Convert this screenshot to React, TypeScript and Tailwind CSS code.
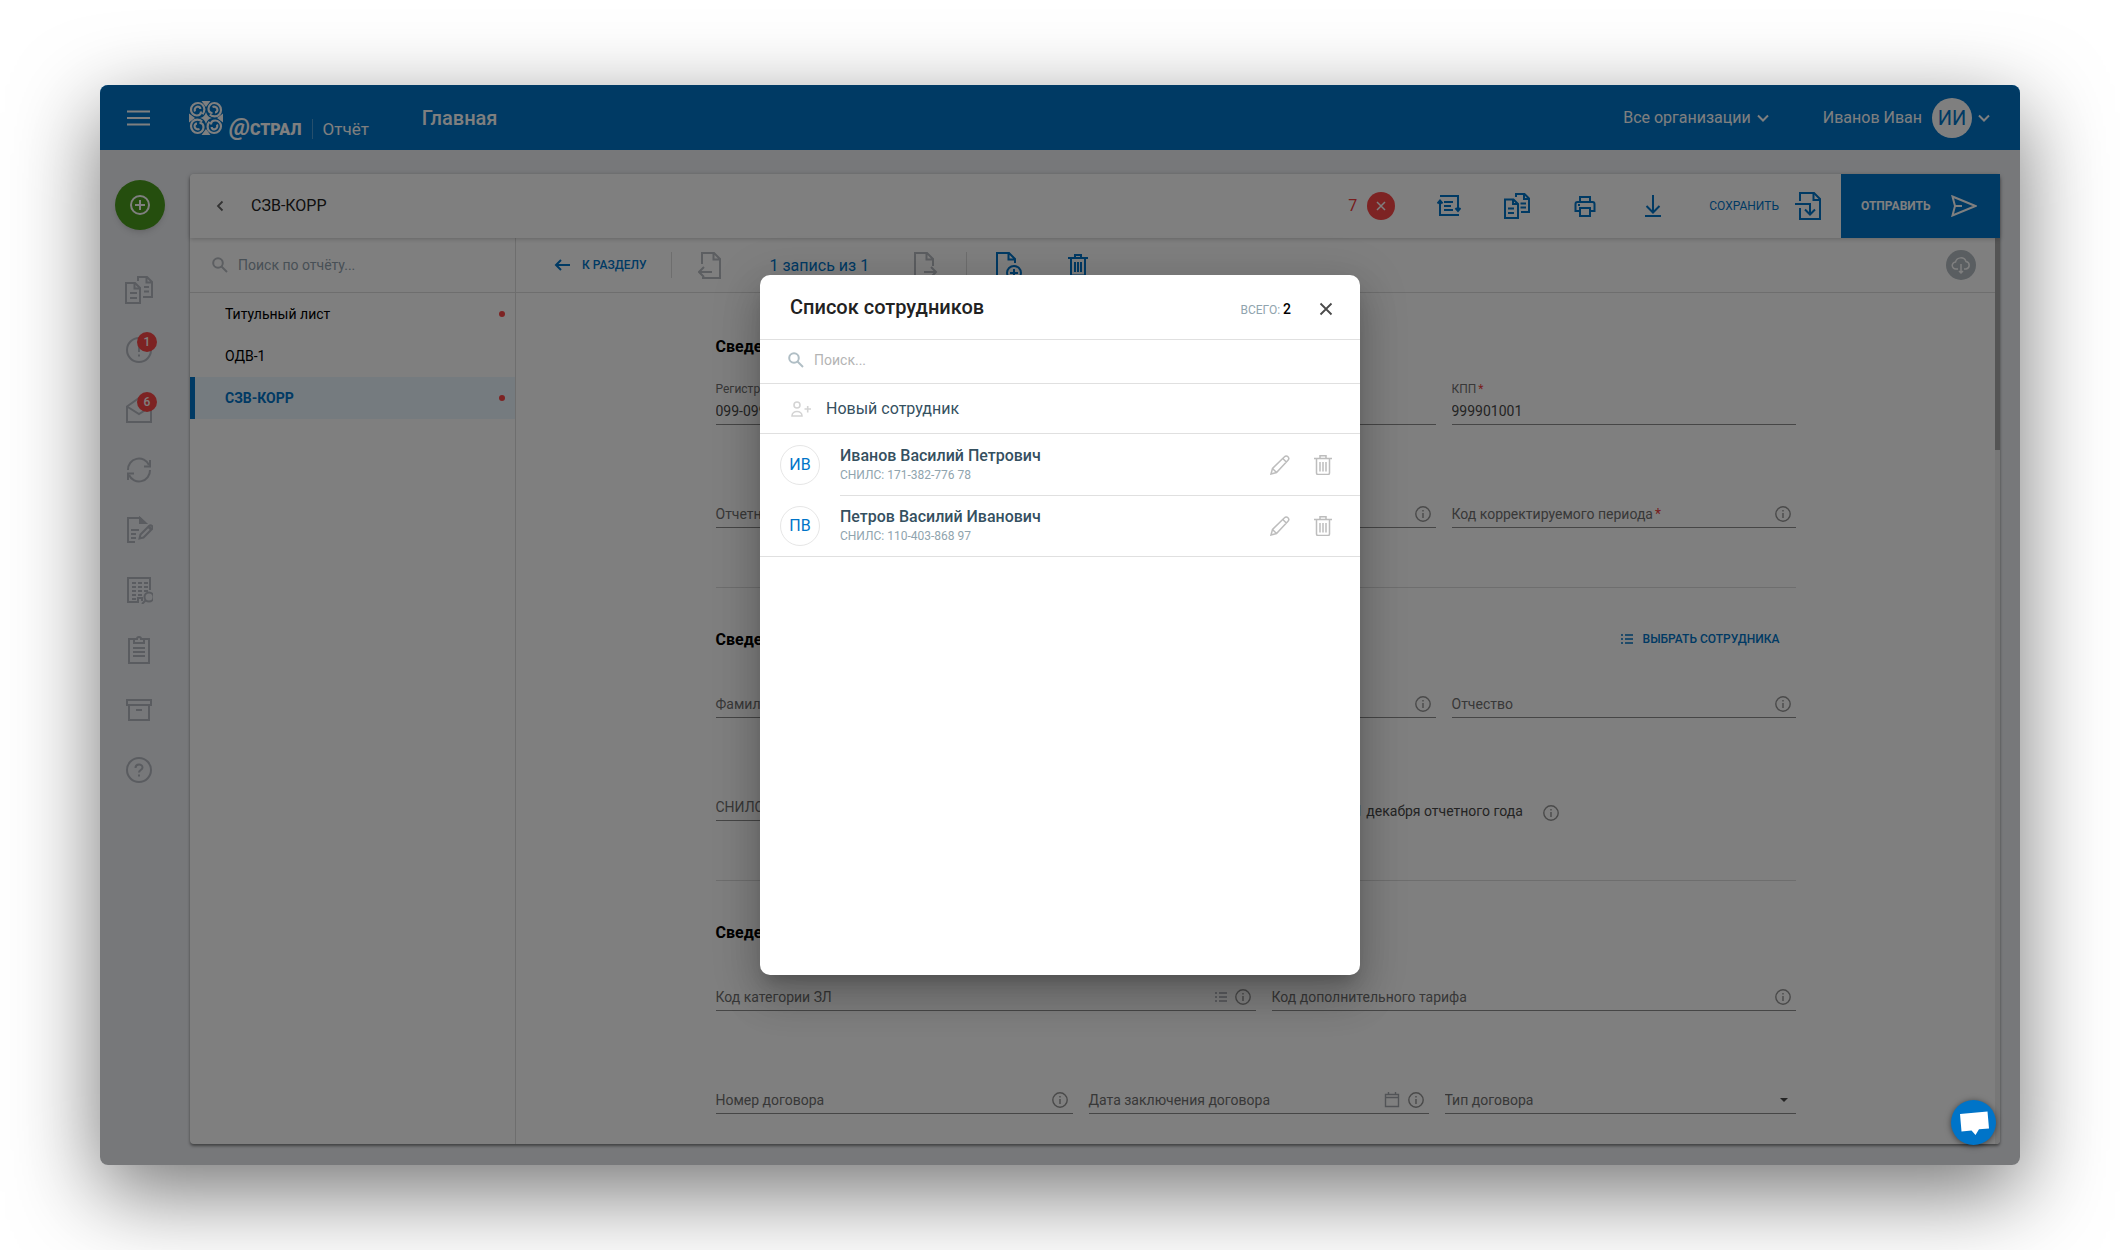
import { useState, type ReactNode } from 'react'
import clsx from 'clsx'

function Svg({ w = 24, h = 24, className, sw = 2, children }: {
  w?: number; h?: number; className?: string; sw?: number; children: ReactNode
}) {
  return (
    <svg width={w} height={h} viewBox={`0 0 ${w} ${h}`} fill="none" stroke="currentColor" strokeWidth={sw} className={clsx('shrink-0', className)} aria-hidden="true">
      {children}
    </svg>
  )
}

/* ---------- icons ---------- */

const ChevronDown = () => <Svg w={12} h={12}><path d="M1 3.5l5 5 5-5" /></Svg>

const LogoMark = () => (
  <Svg w={34} h={34} sw={2.2}>
    {['', 'rotate(90 17 17)', 'rotate(180 17 17)', 'rotate(270 17 17)'].map(t => (
      <g key={t} transform={t}>
        <path d="M13.500 13.200c1.200-1.300 1.900-3 1.900-5C15.400 4.500 12.500 2 9 2 5 2 2 5 2 8.700c0 3.300 2.600 5.800 5.800 5.800 2.600 0 4.200-1.800 4.200-4" />
        <path d="M6 10.500C5.200 8.500 6 6.300 8 5.700c1.800-.500 3.400.600 3.300 2.300" />
        <path d="M12.500 0h9L17 6z" fill="currentColor" stroke="none" />
      </g>
    ))}
    <path d="M17 11c1 3.500 2.500 5 6 6-3.500 1-5 2.500-6 6-1-3.500-2.500-5-6-6 3.500-1 5-2.500 6-6z" fill="currentColor" stroke="none" />
  </Svg>
)

const SearchIcon = ({ className }: { className?: string }) => (
  <Svg w={16} h={16} className={className}><circle cx="6" cy="6" r="4.800" /><path d="M9.500 9.500l5.500 5.500" /></Svg>
)

const CopiesIcon = () => (
  <Svg w={28} h={28}>
    <path d="M1 7h9l5 5v15H1z" /><path d="M9.500 7v5.500H15" /><path d="M5 17h7M5 22h7" />
    <path d="M13 5V1h9l5 5v15h-9M21.500 1v5.500H27M19 11h5M19 15.500h5" />
  </Svg>
)
const AlertIcon = () => <Svg w={28} h={28}><circle cx="14" cy="14" r="12" /><path d="M14 8v8M14 18.500v2" /></Svg>
const MailIcon = () => <Svg w={28} h={28}><path d="M2 10.500L14 2l12 8.500V26H2z" /><path d="M2 10.500l12 7.500 12-7.500" /></Svg>
const RefreshIcon = () => (
  <Svg w={28} h={28}>
    <path d="M3 14A11 11 0 0 1 24 9" /><path d="M25 4v6.500h-6" />
    <path d="M25 14A11 11 0 0 1 4 19" /><path d="M3 24v-6.500h6" />
  </Svg>
)
const EditDocIcon = () => (
  <Svg w={28} h={28}>
    <path d="M10 26H3V2h12l5 5" /><path d="M15 2v5h5.500z" fill="currentColor" />
    <path d="M6 14h8M6 18h5M6 22h5" />
    <path d="M14.500 22.500l1-4L24 10a2.100 2.100 0 0 1 3 3l-8.500 8.500z" />
    <path d="M23.500 10.500l3 3" strokeWidth="3" />
  </Svg>
)
const BuildingIcon = () => (
  <Svg w={28} h={28}>
    <path d="M12 26H3V2h22v12" />
    <path d="M7 7h16M7 11h16M7 15h16M7 19h10M7 23h4" strokeDasharray="4 2" />
    <path d="M8 26h5v-4h4v3" /><circle cx="24" cy="21" r="4.500" /><path d="M20.500 24.500L17 28" />
  </Svg>
)
const ClipboardIcon = () => (
  <Svg w={28} h={28}>
    <path d="M8 3H4v24h20V3h-4" /><path d="M9 3h3a2 2 0 0 1 4 0h3v4H9z" /><path d="M8 12h12M8 16h12M8 20h12" />
  </Svg>
)
const ArchiveIcon = () => <Svg w={28} h={28}><path d="M2 4h24v5H2zM4 9v15h20V9M11 14h6" /></Svg>
const HelpIcon = () => (
  <Svg w={28} h={28}><circle cx="14" cy="14" r="12" /><path d="M10.500 12c0-4.500 7-4.500 7-.500 0 2.500-3.500 2.500-3.500 5M14 18.500v2" /></Svg>
)

const SwapIcon = () => (
  <Svg>
    <path d="M3 2h18v15M3 7v14h19" /><path d="M.500 9.500L3 6.500l2.500 3M18.500 14l2.500 3 2.500-3" /><path d="M7 8h9M7 12h7M7 16h9" />
  </Svg>
)
const CopiesSmallIcon = () => (
  <Svg w={26} h={26} sw={2}>
    <path d="M1 6.500h8.500l4.500 4.500v14H1z" /><path d="M9 6.500V11h5M4 15.500h6M4 20h6" />
    <path d="M12 4V1h8.500L25 5.500V19h-8M20 1v5h5M16.500 10.500H22M16.500 14.500H22" />
  </Svg>
)
const PrinterIcon = () => (
  <Svg w={24} h={24}>
    <path d="M7 8V3h10v5M6 17H2.500V10q0-2 2-2h15q2 0 2 2v7H18" /><path d="M7 14h10v8H7z" /><path d="M5 11h2" />
  </Svg>
)
const DownloadIcon = () => <Svg><path d="M12 1v17M5.500 12l6.500 6.500 6.500-6.500M4 22h16" /></Svg>
const SaveIcon = () => (
  <Svg w={26} h={28}>
    <path d="M5 9V1h14l6 6v20H5V16" /><path d="M18.500 1v7H25M0 12h15v10M10 17.500l5 5 5-5" />
  </Svg>
)
const SendIcon = () => <Svg w={26} h={22}><path d="M1.500 1.500l23 9.500-23 9.500L4 11zM4 11h7" /></Svg>
const CloudIcon = () => (
  <Svg w={20} h={20} sw={1.5}>
    <path d="M7 14H5a3.500 3.500 0 0 1-.500-7A5.500 5.500 0 0 1 15 6.500a3.800 3.800 0 0 1 0 7.500h-2M10 9v9M8 16l2 2 2-2" />
  </Svg>
)
const DocLeftIcon = () => <Svg w={24} h={28}><path d="M4 13V2h12l6 6v19H4M15.500 2v6.500H22M14 21H1M6 16l-5 5 5 5" /></Svg>
const DocRightIcon = () => <Svg w={24} h={28}><path d="M1 27V2h12l6 6v7M12.500 2v6.500H19M1 27h17M10 21h12M17 16l5 5-5 5" /></Svg>
const DocPlusIcon = () => (
  <Svg w={26} h={28}>
    <path d="M9 26H1V2h12l6 6v4M12.500 2v6.500H19" /><circle cx="18" cy="22" r="7" /><path d="M18 18v8M14 22h8" />
  </Svg>
)
const TrashIcon = () => <Svg w={20} h={24}><path d="M3 5v17.500h14V5M0 5h20M7 5V2h6v3M7 9v10M10 9v10M13 9v10" /></Svg>
const RowTrashIcon = () => (
  <Svg w={18} h={20} sw={1}>
    <path d="M2.500 3.500V18q0 1.500 1.500 1.500h10q1.500 0 1.500-1.500V3.500M0 3.500h18M6 3V.800h6V3M6 7v9.500M9 7v9.500M12 7v9.500" strokeWidth="1.500" />
  </Svg>
)
const PencilIcon = () => (
  <Svg w={20} h={20} sw={1}>
    <path d="M1 19l1.500-5.500L14.500 1.800a2.300 2.300 0 0 1 3.500 3.400L6.500 17.500zM12.800 3.500l3.500 3.500M2.500 13.500l4 4" strokeWidth="1.500" />
  </Svg>
)
const ListIcon = ({ className }: { className?: string }) => (
  <Svg w={12} h={12} className={className}><path d="M0 2h2M4 2h8M0 6h2M4 6h8M0 10h2M4 10h8" strokeWidth="1.500" /></Svg>
)
const InfoIcon = () => (
  <Svg w={16} h={16} sw={1} className="text-[#949494]"><circle cx="8" cy="8" r="7.200" strokeWidth="1.400" /><path d="M8 7v5M8 4v1.500" strokeWidth="1.400" /></Svg>
)
const CalendarIcon = () => (
  <Svg w={16} h={16} sw={1} className="text-[#a4a8ae]"><path d="M1.500 2.500h13v12h-13zM1.500 5.500h13M4.500 0v2.500M11.500 0v2.500" strokeWidth="1.400" /></Svg>
)

/* ---------- form parts ---------- */

type FieldProps = {
  id: string
  label: string
  value?: string
  required?: boolean
  icons?: ReactNode
}

function Field({ id, label, value, required, icons }: FieldProps) {
  const [text, setText] = useState(value ?? '')
  const filled = text !== ''
  const caption = (
    <label htmlFor={id} className={clsx('whitespace-nowrap text-[#707070]', filled ? 'text-xs' : 'text-sm')}>
      {label}{required && <span className="ml-0.5 text-[#f03a3a]">*</span>}
    </label>
  )
  return (
    <div className="flex h-[46px] min-w-0 flex-col justify-end">
      {filled && caption}
      <div className="flex h-7 items-center gap-2 border-b border-[#8c8c8c] pr-[5px]">
        {!filled && caption}
        <input id={id} value={text} onChange={e => setText(e.target.value)} className="min-w-0 flex-1 bg-transparent text-sm text-[#484848] outline-none" />
        {icons}
      </div>
    </div>
  )
}

function Section({ title, action, last, children }: { title: string; action?: ReactNode; last?: boolean; children: ReactNode }) {
  return (
    <section className={clsx('pt-[39px]', !last && 'border-b border-[#dcdcdc] pb-[59px]')}>
      <div className="mb-[21px] flex h-6 items-center justify-between">
        <h2 className="pt-0.5 text-base font-bold text-black">{title}</h2>
        {action}
      </div>
      <div className="flex flex-col gap-[57px]">{children}</div>
    </section>
  )
}

/* ---------- data ---------- */

const sideItems: { name: string; icon: ReactNode; badge?: number }[] = [
  { name: 'Отчёты', icon: <CopiesIcon /> },
  { name: 'Требования', icon: <AlertIcon />, badge: 1 },
  { name: 'Письма', icon: <MailIcon />, badge: 6 },
  { name: 'Сверки', icon: <RefreshIcon /> },
  { name: 'Документы', icon: <EditDocIcon /> },
  { name: 'Контрагенты', icon: <BuildingIcon /> },
  { name: 'Справки', icon: <ClipboardIcon /> },
  { name: 'Архив', icon: <ArchiveIcon /> },
  { name: 'Помощь', icon: <HelpIcon /> },
]

const reportParts = [
  { name: 'Титульный лист', hasError: true },
  { name: 'ОДВ-1', hasError: false },
  { name: 'СЗВ-КОРР', hasError: true },
]

const employees = [
  { initials: 'ИВ', name: 'Иванов Василий Петрович', snils: '171-382-776 78' },
  { initials: 'ПВ', name: 'Петров Василий Иванович', snils: '110-403-868 97' },
]

const threeCols = 'grid grid-cols-[348fr_356fr_344fr] gap-4'

/* ---------- layout ---------- */

function Header() {
  return (
    <header className="flex h-[65px] items-center rounded-t-lg bg-[#0074c8] pr-[30px] pl-[27px] text-white">
      <button aria-label="Меню" className="mr-[39px]">
        <Svg w={23} h={16}><path d="M0 1.500h23M0 8h23M0 14.500h23" /></Svg>
      </button>
      <a href="#" className="flex items-baseline gap-1.5 pt-1">
        <LogoMark />
        <span className="flex items-baseline leading-none font-black">
          <span className="text-2xl leading-none font-bold italic">@</span>
          <span className="text-base leading-none">СТРАЛ</span>
        </span>
        <span className="ml-1 border-l border-white/30 pl-2.5 text-[17px] leading-5">Отчёт</span>
      </a>
      <h1 className="ml-[53px] text-xl font-medium">Главная</h1>
      <button className="ml-auto flex items-center gap-1.5 text-base">Все организации <ChevronDown /></button>
      <button className="ml-[54px] flex items-center gap-1.5 text-base">
        Иванов Иван
        <span className="ml-1 flex size-10 items-center justify-center rounded-full bg-white text-xl text-[#0074c8]">ИИ</span>
        <ChevronDown />
      </button>
    </header>
  )
}

function Sidebar() {
  return (
    <nav className="mr-3 flex w-[78px] shrink-0 flex-col items-center pt-1.5">
      <button aria-label="Создать" className="mb-[30px] ml-px flex size-[50px] items-center justify-center rounded-full bg-[#4a9c1c] text-white shadow-md">
        <Svg w={20} h={20}><circle cx="10" cy="10" r="9" /><path d="M10 5v10M5 10h10" /></Svg>
      </button>
      {sideItems.map(item => (
        <a key={item.name} href="#" aria-label={item.name} className="flex h-15 items-center text-[#b4b8c0]">
          <span className="relative">
            {item.icon}
            {item.badge && (
              <span className="absolute -top-1 -right-1 flex size-5 items-center justify-center rounded-full bg-[#fa4646] text-xs font-medium text-white">
                {item.badge}
              </span>
            )}
          </span>
        </a>
      ))}
    </nav>
  )
}

function ReportBar() {
  return (
    <div className="relative flex h-16 items-center rounded-t bg-white pl-[25px] text-[#0074c8] shadow-[0_1px_5px_rgba(0,0,0,0.22)]">
      <button aria-label="Назад" className="mr-[26px] text-[#666]">
        <Svg w={10} h={12}><path d="M7.500 1.500L3 6l4.500 4.500" strokeWidth="1.800" /></Svg>
      </button>
      <span className="text-base text-[#222]">СЗВ-КОРР</span>
      <div className="ml-auto flex items-center">
        <span className="mr-2.5 text-base text-[#f03a3a]">7</span>
        <button aria-label="Ошибки" className="mr-[42px] flex size-7 items-center justify-center rounded-full bg-[#fa4646] text-white">
          <Svg w={10} h={10}><path d="M1 1l8 8M9 1l-8 8" strokeWidth="1.500" /></Svg>
        </button>
        <div className="flex items-center gap-11">
          <button aria-label="Обмен"><SwapIcon /></button>
          <button aria-label="Копировать" className="-mx-px"><CopiesSmallIcon /></button>
          <button aria-label="Печать"><PrinterIcon /></button>
          <button aria-label="Скачать"><DownloadIcon /></button>
        </div>
        <button className="mr-5 ml-11 flex items-center gap-4 text-xs">СОХРАНИТЬ <SaveIcon /></button>
      </div>
      <button className="flex h-full w-[159px] items-center gap-5 bg-[#0074c8] pl-5 text-xs font-bold text-white">
        ОТПРАВИТЬ <SendIcon />
      </button>
    </div>
  )
}

function PartsPanel() {
  return (
    <aside className="w-[326px] shrink-0 border-r border-[#dcdcdc]">
      <div className="flex h-[55px] items-center gap-2.5 border-b border-[#dcdcdc] pl-[22px]">
        <SearchIcon className="text-[#b8bcc2]" />
        <input aria-label="Поиск по отчёту" placeholder="Поиск по отчёту..." className="min-w-0 flex-1 text-sm outline-none placeholder:text-[#90a0ac]" />
      </div>
      {reportParts.map((part, i) => (
        <a
          key={part.name}
          href="#"
          className={clsx(
            'flex h-[42px] items-center justify-between border-l-5 pr-2.5 pl-[30px] text-sm',
            i === 2 ? 'border-[#0074c8] bg-[#eaf6ff] font-bold text-[#0074c8]' : 'border-transparent text-black',
          )}
        >
          {part.name}
          {part.hasError && <span className="size-1.5 rounded-full bg-[#fa4646]" />}
        </a>
      ))}
    </aside>
  )
}

function RecordBar() {
  return (
    <div className="flex h-[55px] items-center border-b border-[#dcdcdc] pr-[19px] pl-[38px] text-[#0074c8]">
      <button className="mr-6 flex items-center gap-3 text-xs font-medium">
        <Svg w={16} h={12}><path d="M16 6H2M7 1L2 6l5 5" /></Svg> К РАЗДЕЛУ
      </button>
      <span className="mr-[26px] h-6.5 border-l border-[#dcdcdc]" />
      <button aria-label="Предыдущая запись" className="text-[#b8bcc2]"><DocLeftIcon /></button>
      <span className="mr-[45px] ml-12 pt-0.5 text-base">1 запись из 1</span>
      <button aria-label="Следующая запись" className="text-[#b8bcc2]"><DocRightIcon /></button>
      <span className="ml-7 h-6.5 border-l border-[#dcdcdc]" />
      <button aria-label="Добавить запись" className="mr-[46px] ml-[29px]"><DocPlusIcon /></button>
      <button aria-label="Удалить запись"><TrashIcon /></button>
      <span className="ml-auto flex size-[30px] items-center justify-center rounded-full bg-[#b4bcc2] text-white"><CloudIcon /></span>
    </div>
  )
}

function ReportForm() {
  return (
    <form className="mx-auto w-full max-w-[1080px] pt-0.5">
      <Section title="Сведения о страхователе">
        <div className={threeCols}>
          <Field id="reg" label="Регистрационный номер в ПФР" value="099-099-099999" required />
          <Field id="inn" label="ИНН" value="9999010010" required />
          <Field id="kpp" label="КПП" value="999901001" required />
        </div>
        <div className={threeCols}>
          <Field id="period" label="Отчетный" icons={<InfoIcon />} />
          <Field id="year" label="Тип сведений" icons={<InfoIcon />} />
          <Field id="corr" label="Код корректируемого периода" required icons={<InfoIcon />} />
        </div>
      </Section>

      <Section
        title="Сведения о застрахованном лице"
        action={
          <button type="button" className="mr-4 flex items-center gap-2.5 text-xs font-medium text-[#0074c8]">
            <ListIcon /> ВЫБРАТЬ СОТРУДНИКА
          </button>
        }
      >
        <div className={threeCols}>
          <Field id="surname" label="Фамилия" icons={<InfoIcon />} />
          <Field id="name" label="Имя" icons={<InfoIcon />} />
          <Field id="patronymic" label="Отчество" icons={<InfoIcon />} />
        </div>
        <div className="grid grid-cols-[348fr_492fr_224fr] gap-4">
          <Field id="snils" label="СНИЛС" icons={<InfoIcon />} />
          <div className="flex items-end justify-end gap-5 text-sm text-[#484848]">
            <label className="flex items-center gap-2">
              <input type="checkbox" className="size-4" />
              Сведения об увольнении на 31 декабря отчетного года
            </label>
            <InfoIcon />
          </div>
        </div>
      </Section>

      <Section title="Сведения о трудовом договоре" last>
        <div className="grid grid-cols-[540fr_524fr] gap-4">
          <Field id="category" label="Код категории ЗЛ" icons={<><ListIcon className="text-[#a4a8ae]" /><InfoIcon /></>} />
          <Field id="tariff" label="Код дополнительного тарифа" icons={<InfoIcon />} />
        </div>
        <div className="grid grid-cols-[357fr_340fr_351fr] gap-4">
          <Field id="number" label="Номер договора" icons={<InfoIcon />} />
          <Field id="date" label="Дата заключения договора" icons={<><CalendarIcon /><InfoIcon /></>} />
          <div className="flex h-[46px] flex-col justify-end">
            <div className="flex h-7 items-center border-b border-[#8c8c8c] pr-2">
              <select aria-label="Тип договора" defaultValue="" className="flex-1 appearance-none bg-transparent text-sm text-[#707070] outline-none">
                <option value="">Тип договора</option>
                <option>Трудовой</option>
                <option>Гражданско-правовой</option>
              </select>
              <svg width="8" height="4" viewBox="0 0 8 4" className="text-[#484848]" aria-hidden="true"><path d="M0 0h8L4 4z" fill="currentColor" /></svg>
            </div>
          </div>
        </div>
      </Section>
    </form>
  )
}

function EmployeesDialog({ onClose }: { onClose: () => void }) {
  return (
    <div
      role="dialog"
      aria-labelledby="employees-title"
      className="min-h-[700px] w-[600px] rounded-[10px] bg-white shadow-[0_11px_15px_-7px_rgba(0,0,0,0.2),0_24px_38px_3px_rgba(0,0,0,0.14),0_9px_46px_8px_rgba(0,0,0,0.12)]"
    >
      <div className="flex h-[65px] items-center border-b border-[#e0e0e0] pr-[27px] pl-[30px]">
        <h2 id="employees-title" className="mr-auto text-xl font-medium text-[#222]">Список сотрудников</h2>
        <div className="flex items-center pt-1">
          <span className="text-xs text-[#90a4ae]">ВСЕГО: <span className="text-sm font-medium text-black">2</span></span>
          <button aria-label="Закрыть" onClick={onClose} className="ml-7 text-[#4a4a4a]">
            <Svg w={14} h={14}><path d="M1.500 1.500l11 11M12.500 1.500l-11 11" strokeWidth="1.800" /></Svg>
          </button>
        </div>
      </div>
      <div className="flex h-11 items-center gap-2.5 border-b border-[#e0e0e0] pb-1 pl-7">
        <SearchIcon className="text-[#b0bec5]" />
        <input aria-label="Поиск сотрудника" placeholder="Поиск..." className="min-w-0 flex-1 text-sm outline-none placeholder:text-[#b4b4b4]" />
      </div>
      <button className="flex h-[50px] w-full items-center gap-[15px] border-b border-[#e0e0e0] pl-[31px] text-base text-[#35505f]">
        <Svg w={20} h={16} sw={1} className="text-[#d4d4d4]">
          <g strokeWidth="1.600"><circle cx="6" cy="4" r="3" /><path d="M1 15c0-6 10-6 10 0zM13.500 8H20M16.700 5v6.500" /></g>
        </Svg>
        Новый сотрудник
      </button>
      <ul className="border-b border-[#e0e0e0]">
        {employees.map((person, i) => (
          <li key={person.snils} className="flex items-center pl-5">
            <span className="mr-5 flex size-10 items-center justify-center rounded-full border border-[#e6e6e6] text-base text-[#0074c8]">{person.initials}</span>
            <div className={clsx('flex h-[61px] flex-1 items-center pr-7', i > 0 && 'border-t border-[#e0e0e0]')}>
              <div className="mr-auto">
                <p className="text-base leading-5 font-medium text-[#35505f]">{person.name}</p>
                <p className="text-xs leading-[18px] text-[#90a4ae]">СНИЛС: {person.snils}</p>
              </div>
              <button aria-label={`Изменить: ${person.name}`} className="mr-6 text-[#bdbdbd]"><PencilIcon /></button>
              <button aria-label={`Удалить: ${person.name}`} className="text-[#bdbdbd]"><RowTrashIcon /></button>
            </div>
          </li>
        ))}
      </ul>
    </div>
  )
}

export default function App() {
  const [dialogOpen, setDialogOpen] = useState(true)

  return (
    <div className="flex min-h-screen bg-white px-25 py-[85px] font-[Roboto,'Noto_Sans',sans-serif]">
      <div className="relative flex min-w-0 flex-1 flex-col rounded-lg bg-[#eef0f4] shadow-[0_27px_86px_rgba(0,0,0,0.55)]">
        <Header />
        <div className="flex flex-1 pt-6 pr-5 pb-[21px]">
          <Sidebar />
          <div className="flex min-w-0 flex-1 flex-col rounded bg-white shadow-[0_2px_3px_rgba(0,0,0,0.45)]">
            <ReportBar />
            <div className="flex flex-1">
              <PartsPanel />
              <div className="min-w-0 flex-1">
                <RecordBar />
                <ReportForm />
              </div>
              <div className="w-[5px] rounded-br bg-[#eee]"><div className="h-[212px] bg-[#a8a8a8]" /></div>
            </div>
          </div>
        </div>

        {dialogOpen && (
          <div className="absolute inset-0 flex items-center justify-center rounded-lg bg-black/50">
            <EmployeesDialog onClose={() => setDialogOpen(false)} />
          </div>
        )}
        <button aria-label="Чат" className="absolute right-6 bottom-5 flex size-[45px] items-center justify-center rounded-full bg-[#0074c8] text-white shadow-[0_1px_6px_rgba(0,0,0,0.5)]">
          <svg width="30" height="24" viewBox="0 0 30 24" aria-hidden="true"><path d="M1 3l27.500-2.500L30 17.500l-10 .8L16.500 24 12.500 19.500l-10 1z" fill="currentColor" /></svg>
        </button>
      </div>
    </div>
  )
}
